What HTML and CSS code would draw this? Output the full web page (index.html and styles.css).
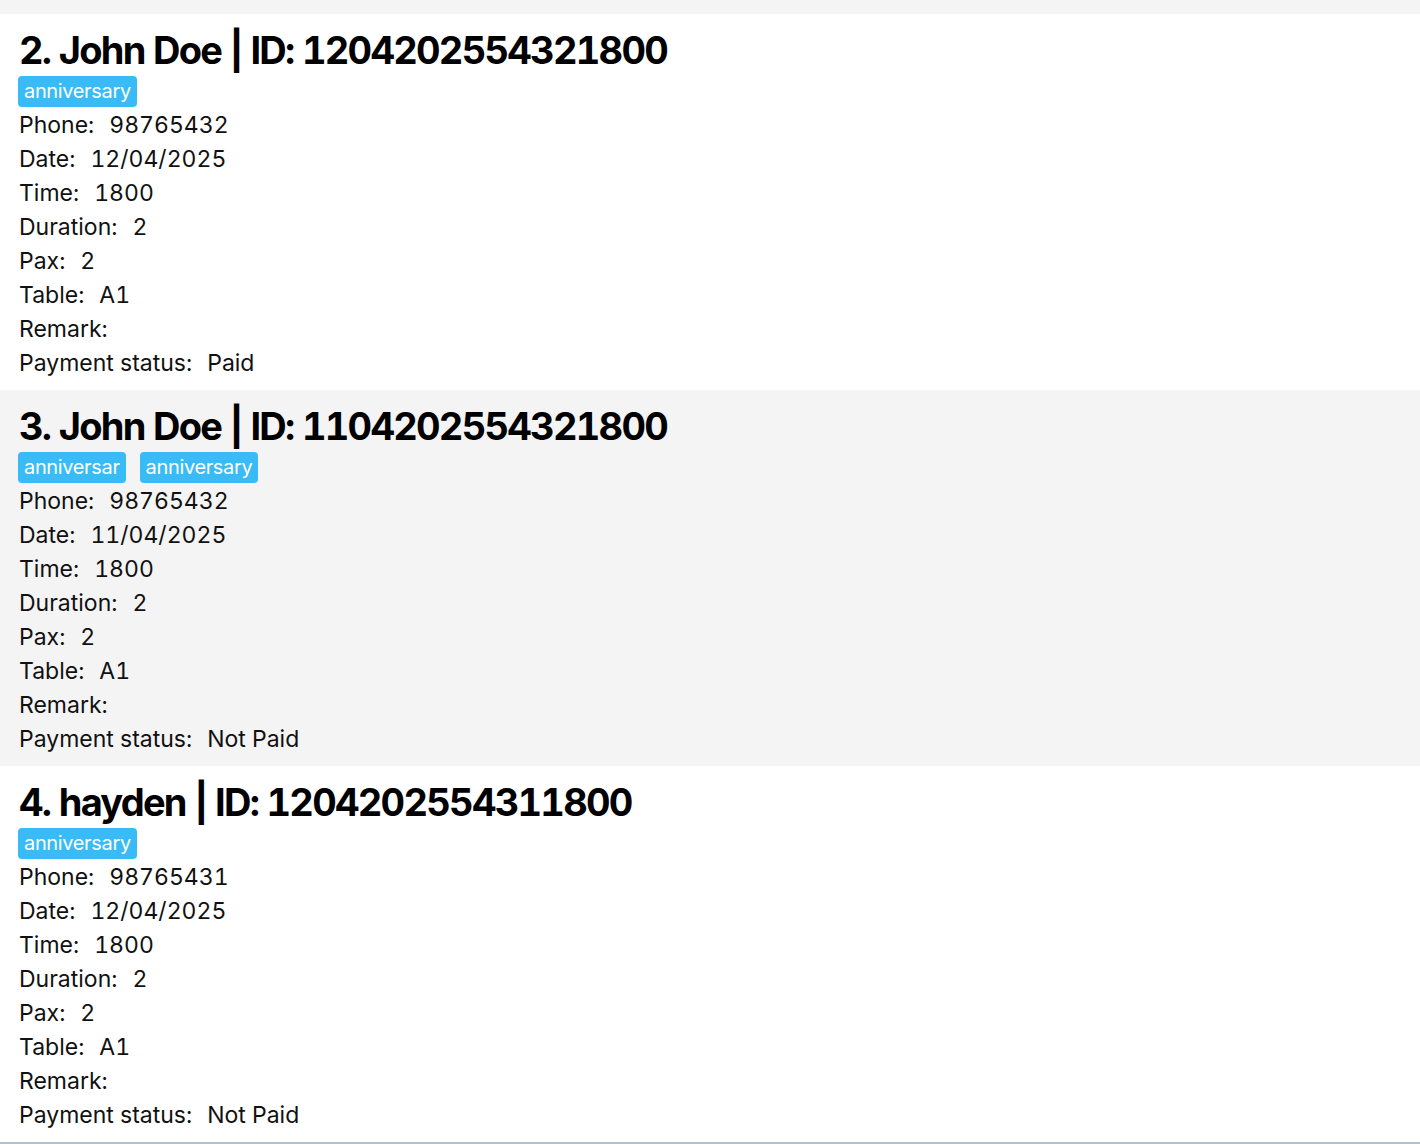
FILE: index.html
```html
<!DOCTYPE html>
<html lang="en">
<head>
<meta charset="utf-8">
<title>Reservations</title>
<link rel="stylesheet" href="styles.css">
</head>
<body>
<div class="list">
  <div class="card partial alt">
    <div class="row"><span class="label">Payment status:</span><span class="value">Paid</span></div>
  </div>
  <div class="card">
    <div class="title">2. John Doe | ID: 1204202554321800</div>
    <div class="tags"><span class="tag">anniversary</span></div>
    <div class="row"><span class="label">Phone:</span><span class="value">98765432</span></div>
    <div class="row"><span class="label">Date:</span><span class="value">12/04/2025</span></div>
    <div class="row"><span class="label">Time:</span><span class="value">1800</span></div>
    <div class="row"><span class="label">Duration:</span><span class="value">2</span></div>
    <div class="row"><span class="label">Pax:</span><span class="value">2</span></div>
    <div class="row"><span class="label">Table:</span><span class="value">A1</span></div>
    <div class="row"><span class="label">Remark:</span><span class="value"></span></div>
    <div class="row"><span class="label">Payment status:</span><span class="value">Paid</span></div>
  </div>
  <div class="card alt">
    <div class="title">3. John Doe | ID: 1104202554321800</div>
    <div class="tags"><span class="tag">anniversar</span><span class="tag">anniversary</span></div>
    <div class="row"><span class="label">Phone:</span><span class="value">98765432</span></div>
    <div class="row"><span class="label">Date:</span><span class="value">11/04/2025</span></div>
    <div class="row"><span class="label">Time:</span><span class="value">1800</span></div>
    <div class="row"><span class="label">Duration:</span><span class="value">2</span></div>
    <div class="row"><span class="label">Pax:</span><span class="value">2</span></div>
    <div class="row"><span class="label">Table:</span><span class="value">A1</span></div>
    <div class="row"><span class="label">Remark:</span><span class="value"></span></div>
    <div class="row"><span class="label">Payment status:</span><span class="value">Not Paid</span></div>
  </div>
  <div class="card">
    <div class="title">4. hayden | ID: 1204202554311800</div>
    <div class="tags"><span class="tag">anniversary</span></div>
    <div class="row"><span class="label">Phone:</span><span class="value">98765431</span></div>
    <div class="row"><span class="label">Date:</span><span class="value">12/04/2025</span></div>
    <div class="row"><span class="label">Time:</span><span class="value">1800</span></div>
    <div class="row"><span class="label">Duration:</span><span class="value">2</span></div>
    <div class="row"><span class="label">Pax:</span><span class="value">2</span></div>
    <div class="row"><span class="label">Table:</span><span class="value">A1</span></div>
    <div class="row"><span class="label">Remark:</span><span class="value"></span></div>
    <div class="row"><span class="label">Payment status:</span><span class="value">Not Paid</span></div>
  </div>
</div>
</body>
</html>
```
FILE: styles.css
```css
html, body {
  margin: 0;
  padding: 0;
  background: #ffffff;
  overflow: hidden;
}
body {
  font-family: Inter, "Noto Sans", sans-serif;
  color: #111111;
}
.list {
  border-bottom: 2px solid #b5bfc8;
}
.card {
  height: 376px;
  box-sizing: border-box;
  padding: 12px 0 0 19px;
  background: #ffffff;
  overflow: hidden;
}
.card.alt {
  background: #f4f4f4;
}
.card.partial {
  height: 14px;
  padding-top: 0;
  display: flex;
  flex-direction: column;
  justify-content: flex-end;
}
.card.partial .row {
  flex: none;
  margin-bottom: 10px;
}
.title {
  font-size: 38px;
  font-weight: 700;
  line-height: 48px;
  letter-spacing: -1.75px;
  font-feature-settings: "tnum";
  color: #000000;
  white-space: nowrap;
}
.tags {
  display: flex;
  gap: 14px;
  margin: 2px 0 1px -1px;
}
.tag {
  background: #38bbf6;
  color: #ffffff;
  font-size: 20px;
  line-height: 31px;
  height: 31px;
  padding: 0 6px;
  border-radius: 4px;
  letter-spacing: -0.35px;
}
.row {
  display: flex;
  font-size: 23px;
  line-height: 34px;
  white-space: nowrap;
  font-feature-settings: "tnum";
}
.label {
  margin-right: 15px;
}
```
